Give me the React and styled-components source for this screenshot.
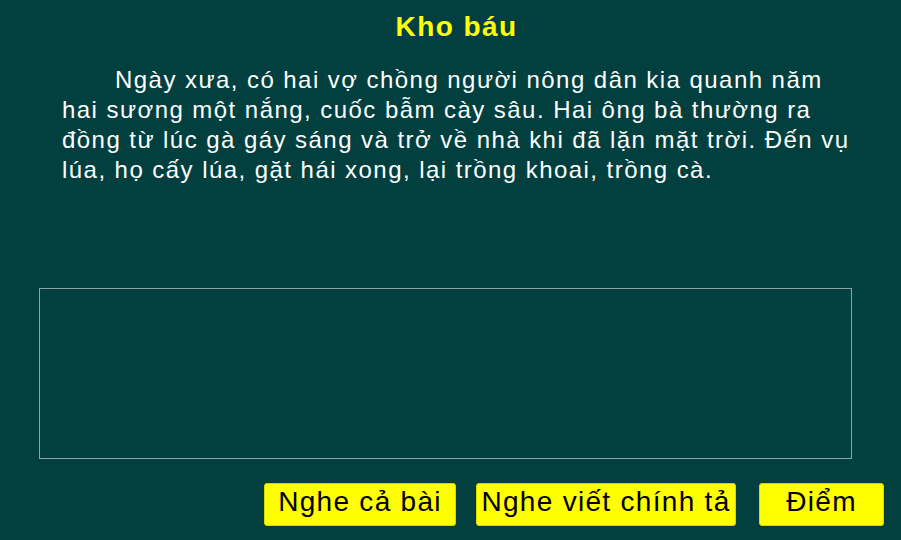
import React from 'react';
import styled, { createGlobalStyle } from 'styled-components';

const GlobalStyle = createGlobalStyle`
  html, body {
    margin: 0;
    padding: 0;
    background: #024040;
  }
  body {
    font-family: "Liberation Sans", Arial, sans-serif;
  }
`;

const Page = styled.div`
  width: 901px;
  height: 540px;
  background: #024040;
  display: flex;
  flex-direction: column;
  box-sizing: border-box;
  padding-top: 10px;
  overflow: hidden;
`;

const Title = styled.h1`
  margin: 0;
  padding: 0 50px 0 62px;
  text-align: center;
  font-size: 28px;
  line-height: 34px;
  font-weight: bold;
  letter-spacing: 1.4px;
  color: #ffff00;
`;

const Passage = styled.p`
  margin: 21px 50px 0 62px;
  font-size: 24px;
  line-height: 30px;
  letter-spacing: 1.45px;
  color: #ffffff;
  text-indent: 53px;
`;

const AnswerBox = styled.textarea`
  display: block;
  width: 813px;
  height: 171px;
  margin: 103px 0 0 39px;
  box-sizing: border-box;
  background: transparent;
  border: 1px solid #8fa3a3;
  border-radius: 0;
  resize: none;
  outline: none;
  color: #ffffff;
  font-family: "Liberation Sans", Arial, sans-serif;
  font-size: 24px;
  padding: 4px 6px;
`;

const Toolbar = styled.div`
  display: flex;
  justify-content: flex-end;
  gap: 20px;
  margin-top: 24px;
  padding-right: 17px;
`;

const Button = styled.button`
  width: ${(p) => p.width}px;
  height: 43px;
  box-sizing: border-box;
  padding: 0 0 7px;
  margin-left: ${(p) => p.offset || 0}px;
  background: #ffff00;
  border: 1px solid #d8d800;
  border-radius: 3px;
  color: #000000;
  font-family: "Liberation Sans", Arial, sans-serif;
  font-size: 28px;
  line-height: 36px;
  letter-spacing: 1.3px;
  white-space: nowrap;
  cursor: pointer;
`;

const App = () => {
  return (
    <Page>
      <GlobalStyle />
      <Title>Kho báu</Title>
      <Passage>
        Ngày xưa, có hai vợ chồng người nông dân kia quanh năm hai sương một
        nắng, cuốc bẫm cày sâu. Hai ông bà thường ra đồng từ lúc gà gáy sáng và
        trở về nhà khi đã lặn mặt trời. Đến vụ lúa, họ cấy lúa, gặt hái xong,
        lại trồng khoai, trồng cà.
      </Passage>
      <AnswerBox spellCheck={false} />
      <Toolbar>
        <Button width={192}>Nghe cả bài</Button>
        <Button width={260}>Nghe viết chính tả</Button>
        <Button width={125} offset={3}>Điểm</Button>
      </Toolbar>
    </Page>
  );
};

export default App;
